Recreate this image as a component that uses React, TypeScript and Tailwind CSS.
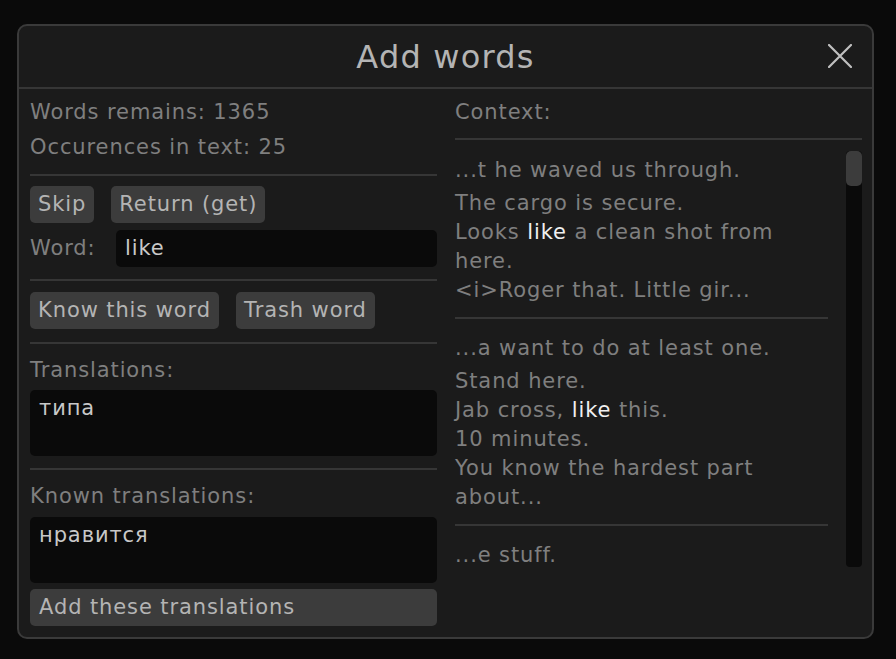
import React from 'react';

const font = { fontFamily: '"DejaVu Sans", "Noto Sans", sans-serif' };

const Sep = ({ className = '' }: { className?: string }) => (
  <div className={`h-[2px] bg-[#363636] ${className}`} />
);

const Btn = ({ children, className = '' }: { children: React.ReactNode; className?: string }) => (
  <div className={`h-[37px] px-[8px] pt-[1px] flex items-center rounded-[5px] bg-[#3c3c3c] text-[#b4b4b4] ${className}`}>
    {children}
  </div>
);

type Ctx = { first: string; lines: React.ReactNode[] };

const hl = (t: string) => <span className="text-[#f0f0f0]">{t}</span>;

const contexts: Ctx[] = [
  {
    first: '...t he waved us through.',
    lines: [
      'The cargo is secure.',
      <>Looks {hl('like')} a clean shot from</>,
      'here.',
      '<i>Roger that. Little gir...',
    ],
  },
  {
    first: '...a want to do at least one.',
    lines: [
      'Stand here.',
      <>Jab cross, {hl('like')} this.</>,
      '10 minutes.',
      'You know the hardest part',
      'about...',
    ],
  },
  { first: '...e stuff.', lines: [] },
];

export default function App() {
  return (
    <div className="w-[896px] h-[659px] bg-[#0a0a0a] pt-[24px] pl-[17px]" style={font}>
      <div className="w-[857px] h-[615px] rounded-[10px] border-2 border-[#3a3a3a] bg-[#1b1b1b] flex flex-col text-[21px] tracking-[0.9px] text-[#7f7f7f]">
        {/* title bar */}
        <div className="h-[61px] relative flex items-center justify-center">
          <span className="text-[32px] tracking-[1.2px] text-[#b4b4b4] leading-none">Add words</span>
          <svg className="absolute right-[20px] top-[18px]" width="24" height="24" viewBox="0 0 24 24">
            <path d="M1 1 L23 23 M23 1 L1 23" stroke="#c0c0c0" strokeWidth="2.2" strokeLinecap="round" />
          </svg>
        </div>
        <Sep />
        <div className="flex flex-1 pl-[11px] pr-[10px] gap-[18px]">
          {/* left column */}
          <div className="w-[407px] flex flex-col pt-[9px]">
            <div className="h-[29px] leading-[29px]">Words remains: 1365</div>
            <div className="h-[29px] leading-[29px] mt-[6px]">Occurences in text: 25</div>
            <Sep className="mt-[12px]" />
            <div className="flex gap-[17px] mt-[10px]">
              <Btn>Skip</Btn>
              <Btn>Return (get)</Btn>
            </div>
            <div className="flex items-center mt-[7px]">
              <span className="w-[86px] pt-[1px]">Word:</span>
              <div className="flex-1 h-[37px] rounded-[5px] bg-[#0a0a0a] px-[9px] pt-[1px] flex items-center text-[#c8c8c8]">like</div>
            </div>
            <Sep className="mt-[12px]" />
            <div className="flex gap-[17px] mt-[11px]">
              <Btn>Know this word</Btn>
              <Btn>Trash word</Btn>
            </div>
            <Sep className="mt-[13px]" />
            <div className="h-[29px] leading-[29px] mt-[11px] pt-[1px]">Translations:</div>
            <div className="h-[66px] rounded-[5px] bg-[#0a0a0a] px-[9px] pt-[3px] mt-[6px] text-[#c8c8c8]">типа</div>
            <Sep className="mt-[12px]" />
            <div className="h-[29px] leading-[29px] mt-[11px] pt-[1px]">Known translations:</div>
            <div className="h-[66px] rounded-[5px] bg-[#0a0a0a] px-[9px] pt-[3px] mt-[7px] text-[#c8c8c8]">нравится</div>
            <div className="h-[37px] rounded-[5px] bg-[#3c3c3c] px-[9px] pt-[1px] flex items-center mt-[6px] text-[#b4b4b4]">
              Add these translations
            </div>
          </div>
          {/* right column */}
          <div className="w-[407px] flex flex-col pt-[9px]">
            <div className="h-[29px] leading-[29px]">Context:</div>
            <Sep className="mt-[11px]" />
            <div className="flex mt-[11px] h-[416px]">
              <div className="w-[373px] flex flex-col pt-[1px]">
                {contexts.map((c, i) => (
                  <div key={i} className="flex flex-col">
                    {i > 0 && <Sep className="mt-[12px] mb-[11px]" />}
                    <div className="h-[29px] leading-[29px] mt-[4px]">{c.first}</div>
                    {c.lines.length > 0 && (
                      <div className="mt-[4px] flex flex-col">
                        {c.lines.map((l, j) => (
                          <div key={j} className="h-[29px] leading-[29px]">{l}</div>
                        ))}
                      </div>
                    )}
                  </div>
                ))}
              </div>
              <div className="ml-auto w-[16px] h-full rounded-[4px] bg-[#0a0a0a]">
                <div className="h-[35px] rounded-[5px] bg-[#3c3c3c]" />
              </div>
            </div>
          </div>
        </div>
      </div>
    </div>
  );
}
